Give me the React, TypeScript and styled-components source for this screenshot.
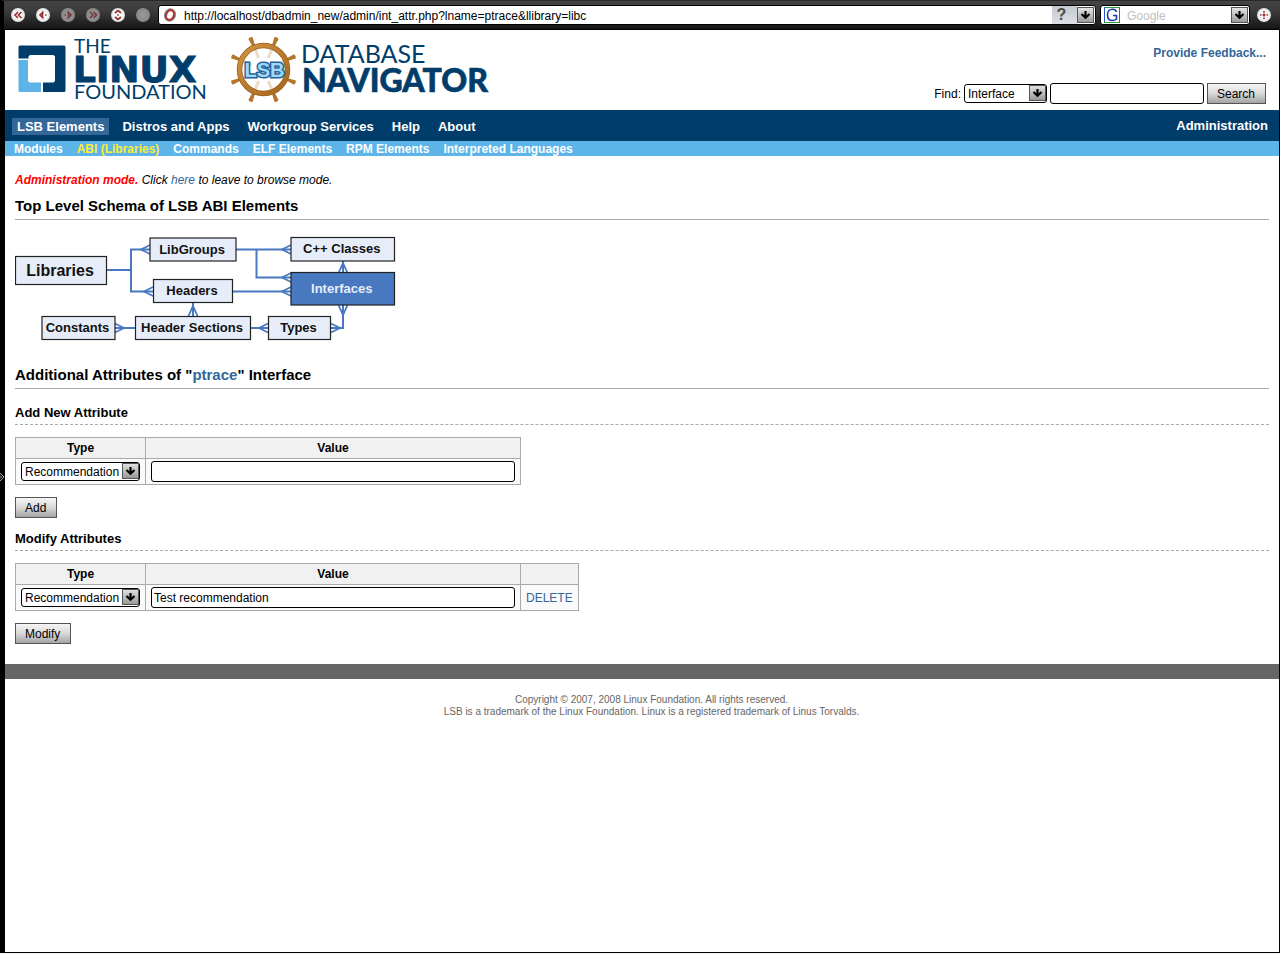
import React from "react";
import styled, { createGlobalStyle } from "styled-components";

const GlobalStyle = createGlobalStyle`
  *, *::before, *::after { box-sizing: border-box; }
  body {
    margin: 0;
    background: #fff;
    color: #000;
    font-family: "Liberation Sans", Arial, sans-serif;
    font-size: 12px;
    line-height: 14px;
  }
  a { color: #336699; text-decoration: none; }
  button, input, select { font: inherit; color: inherit; }
`;

const Window = styled.div`
  display: flex;
  flex-direction: column;
  min-height: 100vh;
  padding-bottom: 1px;
  background: #f0f0f0;
`;

const Toolbar = styled.div`
  display: flex;
  align-items: center;
  height: 30px;
  padding: 0 9px 0 7px;
  border-left: 4px solid #000;
  border-top: 1px solid #2a2a2a;
  border-bottom: 1px solid #000;
  background: linear-gradient(#444, #3c3c3c 35%, #151515);
`;

const RoundButtons = styled.div`
  display: flex;
  gap: 11px;
  margin-right: 8px;
`;

const RoundButton = styled.button`
  display: block;
  width: 14px;
  height: 14px;
  padding: 0;
  border: 0;
  border-radius: 50%;
  background: ${(p) => (p.disabled ? "radial-gradient(#999, #808080)" : "radial-gradient(#fff 30%, #c8c8c8)")};
  svg { display: block; }
`;

const AddressBox = styled.div`
  display: flex;
  flex: 1;
  align-items: center;
  height: 20px;
  margin-right: 4px;
  padding-left: 4px;
  border: 1px solid #000;
  border-radius: 3px;
  background: #fff;
  overflow: hidden;
`;

const SearchBox = styled(AddressBox)`
  flex: 0 0 150px;
  margin-right: 7px;
  padding-left: 3px;
`;

const BarInput = styled.input`
  flex: 1;
  min-width: 0;
  padding: 1px 0 0 7px;
  border: 0;
  outline: 0;
  background: transparent;
  &::placeholder { color: #c0c0c0; opacity: 1; }
`;

const HelpButton = styled.button`
  width: 25px;
  height: 18px;
  padding: 0 6px 0 0;
  border: 0;
  background: linear-gradient(#c4c9d0, #dde1e6);
  color: #4a4a4a;
  font-size: 16px;
  font-weight: bold;
  line-height: 18px;
`;

const ArrowBox = styled.button`
  width: 17px;
  height: 16px;
  margin-right: 1px;
  padding: 0;
  border: 1px solid #555;
  background: linear-gradient(#e4e4e4, #9c9c9c);
  svg { display: block; margin: 0 auto; }
`;

const Frame = styled.div`
  display: flex;
  flex: 1;
  border-right: 1px solid #000;
  border-bottom: 1px solid #000;
  background: #fff;
`;

const PanelHandle = styled.button`
  display: flex;
  flex: 0 0 5px;
  align-items: center;
  padding: 0 0 28px;
  border: 0;
  background: #000;
`;

const Page = styled.div`
  flex: 1;
  min-width: 0;
`;

const Header = styled.header`
  display: flex;
  justify-content: space-between;
  height: 80px;
  padding: 0 13px 0 10px;
`;

const HeaderSide = styled.div`
  display: flex;
  flex-direction: column;
  align-items: flex-end;
  justify-content: space-between;
  padding: 16px 0 6px;
  font-weight: bold;
`;

const FindForm = styled.form`
  display: flex;
  align-items: center;
  gap: 3px;
  font-weight: normal;
`;

const PickerBox = styled.span<{ $width: number }>`
  position: relative;
  display: block;
  width: ${(p) => p.$width}px;
  height: 19px;
`;

const Select = styled.select`
  appearance: none;
  display: block;
  width: 100%;
  height: 19px;
  padding: 0 0 0 3px;
  border: 1px solid #000;
  border-radius: 3px;
  background: #fff;
  line-height: 16px;
`;

const PickerArrow = styled.span`
  position: absolute;
  top: 1px;
  right: 1px;
  width: 17px;
  height: 16px;
  border: 1px solid #555;
  background: linear-gradient(#e0e0e0, #999);
  pointer-events: none;
  svg { display: block; margin: 0 auto; }
`;

const TextInput = styled.input<{ $width: number }>`
  display: block;
  width: ${(p) => p.$width}px;
  height: 21px;
  padding: 0 2px;
  border: 1px solid #000;
  border-radius: 3px;
  background: #fff;
`;

const Button = styled.button`
  height: 21px;
  padding: 1px 10px 0 9px;
  border: 1px solid #555;
  background: linear-gradient(#f6f6f6, #d8d8d8 50%, #a4a4a4);
  line-height: 16px;
`;

const MainNav = styled.nav`
  display: flex;
  align-items: center;
  gap: 8px;
  height: 31px;
  padding: 1px 11px 0 7px;
  background: #003d6a;
  font-size: 13px;
  font-weight: bold;
`;

const MainLink = styled.a<{ $active?: boolean }>`
  padding: 0 5px;
  line-height: 17px;
  color: #fff;
  background: ${(p) => (p.$active ? "#336699" : "transparent")};
`;

const AdminLink = styled.a`
  margin-left: auto;
  color: #fff;
`;

const SubNav = styled.nav`
  display: flex;
  align-items: center;
  gap: 14px;
  height: 15px;
  padding: 1px 9px 0;
  background: #5cb4e8;
  font-weight: bold;
`;

const SubLink = styled.a<{ $active?: boolean }>`
  color: ${(p) => (p.$active ? "#ffee33" : "#fff")};
`;

const Content = styled.main`
  padding: 17px 10px 20px;
`;

const ModeNote = styled.p`
  margin: 0 0 10px;
  font-style: italic;
  strong { color: #f00; }
`;

const SectionTitle = styled.h2`
  margin: 0 0 16px;
  padding-bottom: 4px;
  border-bottom: 1px solid #aaa;
  font-size: 15px;
  line-height: 18px;
`;

const SubTitle = styled.h3`
  margin: 0 0 12px;
  padding-bottom: 3px;
  border-bottom: 1px dashed #aaa;
  font-size: 13px;
  line-height: 16px;
`;

const Schema = styled.svg`
  display: block;
  margin-bottom: 25px;
`;

const AttributeForm = styled.form`
  margin-top: 13px;
`;

const AttributeTable = styled.table`
  margin-bottom: 12px;
  border-collapse: collapse;
  th, td { border: 1px solid #aaa; }
  th { height: 21px; padding: 0; background: #f1f1f1; }
  td { padding: 2px 5px; background: #fafafa; }
`;

const PageFooter = styled.footer`
  padding: 15px 0 0 19px;
  border-top: 15px solid #666;
  color: #666;
  font-size: 10px;
  line-height: 12px;
  text-align: center;
  p { margin: 0; }
`;

const DownArrow = () => (
  <svg width="11" height="14" viewBox="0 0 11 14" aria-hidden="true">
    <path d="M5.500 3v6M1.500 6l4 3.800L9.500 6" fill="none" stroke="#000" strokeWidth="2.200" />
  </svg>
);

type Glyph = "rewind" | "back" | "forward" | "fast" | "reload" | "blank" | "view";

const glyphPaths: Record<Glyph, string> = {
  rewind: "M7 4L4 7l3 3M10.500 4l-3 3 3 3",
  back: "M7.500 3.500L4 7l3.500 3.500M6.500 5v4M9 7h1.500",
  forward: "M6.500 3.500L10 7l-3.500 3.500M7.500 5v4M5 7H3.500",
  fast: "M4 4l3 3-3 3M7.500 4l3 3-3 3",
  reload: "M4 5l3-2.500L10 5M4 9l3 2.500L10 9M6.200 7h1.600",
  blank: "",
  view: "M3 7h1.500M9.500 7H11M7 3v1.500M7 9.500V11M5.500 7h3M7 5.500v3",
};

function NavButton({ glyph, label, disabled }: { glyph: Glyph; label: string; disabled?: boolean }) {
  return (
    <RoundButton type="button" aria-label={label} disabled={disabled}>
      <svg width="14" height="14" viewBox="0 0 14 14">
        <path d={glyphPaths[glyph]} fill="none" stroke={disabled ? "#743c3c" : "#963030"} strokeWidth="1.700" />
      </svg>
    </RoundButton>
  );
}

function Picker({ id, label, width, options }: { id: string; label: string; width: number; options: string[] }) {
  return (
    <PickerBox $width={width}>
      <Select id={id} aria-label={label}>
        {options.map((o) => (
          <option key={o}>{o}</option>
        ))}
      </Select>
      <PickerArrow>
        <DownArrow />
      </PickerArrow>
    </PickerBox>
  );
}

const handleAngles = [22.5, 67.5, 112.5, 157.5, 202.5, 247.5, 292.5, 337.5];

const Logos = () => (
  <svg width="480" height="80" viewBox="15 30 480 80" role="img" aria-label="The Linux Foundation, LSB Database Navigator">
    <defs>
      <linearGradient id="wood" x1="0" y1="0" x2="1" y2="1">
        <stop offset="0" stopColor="#cf9440" />
        <stop offset="1" stopColor="#a8641c" />
      </linearGradient>
    </defs>
    <path d="M20 45.500h44a1.500 1.500 0 0 1 1.500 1.500v43.500a1.500 1.500 0 0 1-1.500 1.500H43V82.500h10.500l1.500-1.500V56.500L53.500 55H30l-1.500 1.500V58.500H18.500V47a1.500 1.500 0 0 1 1.500-1.500z" fill="#003d6a" />
    <path d="M18.500 60h9.500v21l1.500 1.500H41V92H20a1.500 1.500 0 0 1-1.500-1.500z" fill="#5cb4e8" />
    <g fill="#003d6a">
      <text x="74" y="53" fontFamily="Lato" fontSize="19">THE</text>
      <text x="73" y="82" fontFamily="DejaVu Sans" fontWeight="bold" fontSize="36" stroke="#003d6a" strokeWidth="1">LINUX</text>
      <text x="74" y="99" fontFamily="Lato" fontSize="20">FOUNDATION</text>
      <text x="301" y="63" fontFamily="Lato" fontSize="25">DATABASE</text>
      <text x="302" y="92" fontFamily="Lato" fontWeight="900" fontSize="32" stroke="#003d6a" strokeWidth="0.600">NAVIGATOR</text>
    </g>
    <g stroke="#ecdcc6" strokeWidth="3">
      {handleAngles.map((a) => (
        <line key={a} x1="263.500" y1="57" x2="263.500" y2="48" transform={`rotate(${a} 263.500 69.500)`} />
      ))}
    </g>
    <g fill="#b5752b">
      {handleAngles.map((a) => (
        <path key={a} d="M262.300 46l-.6-6-.5-4.500q2.300-1.500 4.600 0l-.5 4.500-.6 6z" transform={`rotate(${a} 263.500 69.500)`} />
      ))}
    </g>
    <circle cx="263.500" cy="69.500" r="24" fill="none" stroke="#96601f" strokeWidth="5.500" />
    <circle cx="263.500" cy="69.500" r="24" fill="none" stroke="url(#wood)" strokeWidth="4" />
    <text
      x="264.500"
      y="77"
      textAnchor="middle"
      fontFamily="Liberation Sans"
      fontWeight="bold"
      fontSize="20"
      fill="#9fd8f8"
      stroke="#22649c"
      strokeWidth="3"
      paintOrder="stroke"
    >
      LSB
    </text>
  </svg>
);

interface Entity {
  name: string;
  x: number;
  y: number;
  w: number;
  h: number;
  size?: number;
  active?: boolean;
}

const entities: Entity[] = [
  { name: "Libraries", x: 0.5, y: 21.5, w: 91, h: 28, size: 16 },
  { name: "LibGroups", x: 135, y: 3, w: 86, h: 23 },
  { name: "C++ Classes", x: 276, y: 2.5, w: 103.5, h: 23.5 },
  { name: "Interfaces", x: 276, y: 37.5, w: 103.5, h: 32.5, active: true },
  { name: "Headers", x: 138.5, y: 44.5, w: 79, h: 23 },
  { name: "Constants", x: 27, y: 81.5, w: 73, h: 23 },
  { name: "Header Sections", x: 120.5, y: 81.5, w: 115, h: 23 },
  { name: "Types", x: 253.5, y: 81.5, w: 62, h: 23 },
];

const SchemaDiagram = () => (
  <Schema width="381" height="105" viewBox="0 1 381 105" role="img" aria-label="LSB ABI schema">
    <g fill="none" stroke="#4878c0" strokeWidth="2">
      <path d="M92 35h24M135 14.500h-19v42h22M221 14.500h55M241.500 14.500v28H276M218 56.500h58M328 26v12M328 70v23h-12M178 68v14M100 93h20M236 93h18" />
      <g strokeWidth="1.800">
        <path d="M135 10l-9 4.500 9 4.500M138 52l-9 4.500 9 4.500M276 10l-9 4.500 9 4.500M276 38l-9 4.500 9 4.500M276 52l-9 4.500 9 4.500" />
        <path d="M323.500 38l4.500-10 4.500 10M323.500 70l4.500 10 4.500-10M173.500 81l4.500-10 4.500 10" />
        <path d="M100 88.500l9 4.500-9 4.500M253 88.500l-9 4.500 9 4.500M316 88.500l9 4.500-9 4.500" />
      </g>
    </g>
    {entities.map((e) => (
      <g key={e.name}>
        <rect x={e.x} y={e.y} width={e.w} height={e.h} fill={e.active ? "#4878c0" : "#e6edf8"} stroke="#222" strokeWidth="1.200" />
        <text
          x={e.x + e.w / 2 - 1}
          y={e.y + e.h / 2 + (e.size ? 5 : 4)}
          textAnchor="middle"
          fontWeight="bold"
          fontSize={e.size ?? 13}
          fill={e.active ? "#e6edf8" : "#111"}
        >
          {e.name}
        </text>
      </g>
    ))}
  </Schema>
);

const attributeTypes = ["Recommendation"];

function AttributeEditor({ id, value, action, removable }: { id: string; value: string; action: string; removable?: boolean }) {
  return (
    <>
      <AttributeTable>
        <thead>
          <tr>
            <th scope="col">Type</th>
            <th scope="col">Value</th>
            {removable && <th />}
          </tr>
        </thead>
        <tbody>
          <tr>
            <td>
              <Picker id={`${id}-type`} label="Type" width={119} options={attributeTypes} />
            </td>
            <td>
              <TextInput $width={364} aria-label="Value" defaultValue={value} />
            </td>
            {removable && (
              <td>
                <a href="#delete">DELETE</a>
              </td>
            )}
          </tr>
        </tbody>
      </AttributeTable>
      <Button type="button">{action}</Button>
    </>
  );
}

export default function App() {
  return (
    <Window>
      <GlobalStyle />
      <Toolbar>
        <RoundButtons>
          <NavButton glyph="rewind" label="Rewind" />
          <NavButton glyph="back" label="Back" />
          <NavButton glyph="forward" label="Forward" disabled />
          <NavButton glyph="fast" label="Fast forward" disabled />
          <NavButton glyph="reload" label="Reload" />
          <NavButton glyph="blank" label="Wand" disabled />
        </RoundButtons>
        <AddressBox>
          <svg width="14" height="14" viewBox="0 0 14 14" aria-hidden="true">
            <ellipse cx="7" cy="7" rx="4.800" ry="5.500" fill="#fff" stroke="#888" strokeWidth="2.400" transform="rotate(20 7 7)" />
            <ellipse cx="7" cy="7" rx="3.800" ry="5" fill="none" stroke="#b03a3a" strokeWidth="2.200" transform="rotate(20 7 7)" />
          </svg>
          <BarInput aria-label="Address" defaultValue="http://localhost/dbadmin_new/admin/int_attr.php?lname=ptrace&llibrary=libc" />
          <HelpButton type="button">?</HelpButton>
          <ArrowBox type="button" aria-label="Address history">
            <DownArrow />
          </ArrowBox>
        </AddressBox>
        <SearchBox>
          <svg width="16" height="16" viewBox="0 0 16 16" aria-hidden="true">
            <path d="M0 .5h16" stroke="#2c9a3c" />
            <path d="M.5 0v16" stroke="#2a58c8" />
            <path d="M15.500 0v16" stroke="#c83030" />
            <path d="M0 15.500h16" stroke="#2c9a3c" />
            <path d="M12.500 5C12 3 10.500 2.200 8.500 2.200 5.500 2.200 3.500 4.500 3.500 8s2 5.500 5 5.500c1.500 0 3-.5 4-1.500V8.500H9" fill="none" stroke="#1c3cac" strokeWidth="1.600" />
          </svg>
          <BarInput aria-label="Web search" placeholder="Google" />
          <ArrowBox type="button" aria-label="Search engines">
            <DownArrow />
          </ArrowBox>
        </SearchBox>
        <NavButton glyph="view" label="View" />
      </Toolbar>
      <Frame>
        <PanelHandle type="button" aria-label="Show panels">
          <svg width="5" height="10" viewBox="0 0 5 10">
            <path d="M0 1l4 4-4 4M0 3.500L1.500 5 0 6.500" fill="none" stroke="#aaa" />
          </svg>
        </PanelHandle>
        <Page>
          <Header>
            <Logos />
            <HeaderSide>
              <a href="#feedback">Provide Feedback...</a>
              <FindForm>
                <label htmlFor="find-kind">Find:</label>
                <Picker id="find-kind" label="Find" width={83} options={["Interface"]} />
                <TextInput $width={154} aria-label="Search text" />
                <Button type="button">Search</Button>
              </FindForm>
            </HeaderSide>
          </Header>
          <MainNav>
            <MainLink href="#elements" $active>LSB Elements</MainLink>
            <MainLink href="#distros">Distros and Apps</MainLink>
            <MainLink href="#workgroup">Workgroup Services</MainLink>
            <MainLink href="#help">Help</MainLink>
            <MainLink href="#about">About</MainLink>
            <AdminLink href="#admin">Administration</AdminLink>
          </MainNav>
          <SubNav>
            <SubLink href="#modules">Modules</SubLink>
            <SubLink href="#abi" $active>ABI (Libraries)</SubLink>
            <SubLink href="#commands">Commands</SubLink>
            <SubLink href="#elf">ELF Elements</SubLink>
            <SubLink href="#rpm">RPM Elements</SubLink>
            <SubLink href="#languages">Interpreted Languages</SubLink>
          </SubNav>
          <Content>
            <ModeNote>
              <strong>Administration mode.</strong> Click <a href="#browse">here</a> to leave to browse mode.
            </ModeNote>
            <SectionTitle>Top Level Schema of LSB ABI Elements</SectionTitle>
            <SchemaDiagram />
            <SectionTitle>
              Additional Attributes of "<a href="#ptrace">ptrace</a>" Interface
            </SectionTitle>
            <AttributeForm>
              <SubTitle>Add New Attribute</SubTitle>
              <AttributeEditor id="new" value="" action="Add" />
            </AttributeForm>
            <AttributeForm>
              <SubTitle>Modify Attributes</SubTitle>
              <AttributeEditor id="edit" value="Test recommendation" action="Modify" removable />
            </AttributeForm>
          </Content>
          <PageFooter>
            <p>Copyright © 2007, 2008 Linux Foundation. All rights reserved.</p>
            <p>LSB is a trademark of the Linux Foundation. Linux is a registered trademark of Linus Torvalds.</p>
          </PageFooter>
        </Page>
      </Frame>
    </Window>
  );
}
